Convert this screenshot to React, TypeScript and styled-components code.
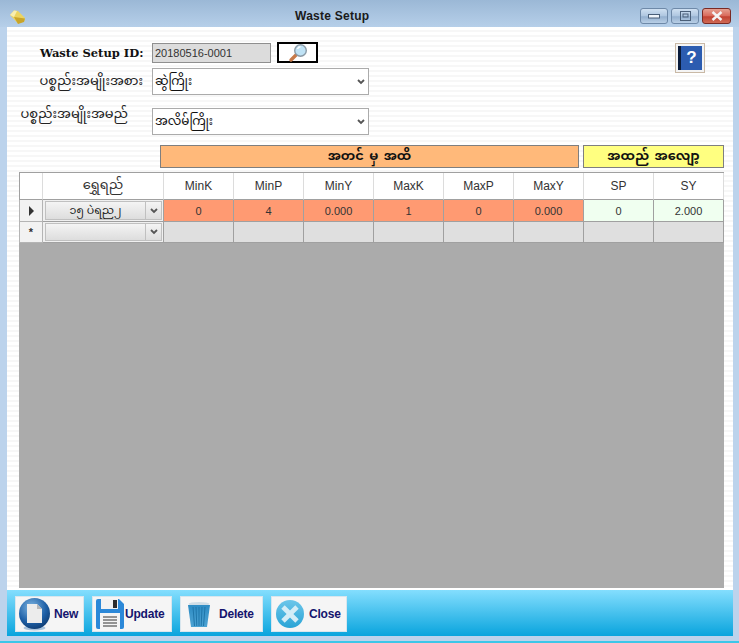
import React from 'react'
import styled, { createGlobalStyle } from 'styled-components'

const GlobalStyle = createGlobalStyle`
  html, body { margin: 0; padding: 0; background: #b9d1ea; }
  * { box-sizing: border-box; }
  body { font-family: "Liberation Sans", Arial, sans-serif; }
`

const MYANMAR = '"Noto Sans Myanmar", "Myanmar Text", "Padauk", "Noto Sans", "DejaVu Sans", sans-serif'

const columns = ['MinK', 'MinP', 'MinY', 'MaxK', 'MaxP', 'MaxY', 'SP', 'SY']
const values = ['0', '4', '0.000', '1', '0', '0.000', '0', '2.000']

const Chevron: React.FC = () => (
  <svg width="8" height="6" viewBox="0 0 8 6">
    <path d="M1 1l3 3 3-3" fill="none" stroke="#555" strokeWidth="1.8" />
  </svg>
)

const GemIcon: React.FC = () => (
  <svg width="16" height="14" viewBox="0 0 16 14">
    <path d="M0 5l4-4.500 4 .5 7 7-1 3.500-6 2z" fill="#ecd460" />
    <path d="M0 5l4-4.500 3 .5-3 6z" fill="#f8eeb0" />
    <path d="M4 7l11 1.500-1 3.500-6 2z" fill="#c9a52a" />
  </svg>
)

const SearchIcon: React.FC = () => (
  <svg width="20" height="20" viewBox="0 0 20 20">
    <path d="M8.500 11.500L3 17" stroke="#c77a4a" strokeWidth="3.400" strokeLinecap="round" />
    <circle cx="12.500" cy="7.500" r="5.800" fill="#bfe2f5" stroke="#8a9aa6" strokeWidth="1.400" />
    <path d="M9.500 6a3.500 3.500 0 0 1 3-2.200" stroke="#fff" strokeWidth="1.400" fill="none" />
  </svg>
)

const NewIcon: React.FC = () => (
  <svg width="31" height="33" viewBox="0 0 31 33">
    <defs>
      <radialGradient id="newGlobe" cx="0.4" cy="0.3" r="0.8">
        <stop offset="0" stopColor="#7fb6e2" />
        <stop offset="0.6" stopColor="#1d5fa6" />
        <stop offset="1" stopColor="#0c3466" />
      </radialGradient>
    </defs>
    <ellipse cx="15.500" cy="30" rx="11" ry="2.500" fill="#a9c3dc" />
    <circle cx="15.500" cy="15.500" r="15.500" fill="url(#newGlobe)" />
    <path d="M8 6h10l5 5v14H8z" fill="#ececec" />
    <path d="M18 6l5 5h-5z" fill="#b8b8b8" />
  </svg>
)

const SaveIcon: React.FC = () => (
  <svg width="28" height="30" viewBox="0 0 28 30">
    <path d="M0 2a2 2 0 0 1 2-2h21l5 5v23a2 2 0 0 1-2 2H2a2 2 0 0 1-2-2z" fill="#2b88d8" />
    <path d="M5 0h17v10H5z" fill="#f2f2f2" />
    <path d="M17 1h4v8h-4z" fill="#2c2c2c" />
    <path d="M4 14h20v16H4z" fill="#f4f4f4" />
    <path d="M7 18h14M7 21h14M7 24h14M7 27h14" stroke="#333" strokeWidth="1.200" />
  </svg>
)

const TrashIcon: React.FC = () => (
  <svg width="22" height="25" viewBox="0 0 22 25">
    <defs>
      <linearGradient id="trashBody" x1="0" y1="0" x2="0" y2="1">
        <stop offset="0" stopColor="#2e8cc4" />
        <stop offset="1" stopColor="#4da3d3" />
      </linearGradient>
    </defs>
    <ellipse cx="11" cy="2" rx="10.500" ry="2" fill="#cfdde6" />
    <path d="M0 3h22l-3 22H3z" fill="url(#trashBody)" />
    <path d="M5 5l1.500 19M8 5l.8 19M11 5v19M14 5l-.8 19M17 5l-1.500 19" stroke="#1f76aa" strokeWidth="1" />
  </svg>
)

const CloseIcon: React.FC = () => (
  <svg width="28" height="28" viewBox="0 0 29 29">
    <defs>
      <linearGradient id="closeDisc" x1="0" y1="0" x2="0" y2="1">
        <stop offset="0" stopColor="#6cc6ea" />
        <stop offset="1" stopColor="#2aa4d6" />
      </linearGradient>
    </defs>
    <circle cx="14.500" cy="14.500" r="14.500" fill="url(#closeDisc)" />
    <path d="M9 5.500l5.500 5.500L20 5.500l3.500 3.500-5.500 5.500 5.500 5.500-3.500 3.500-5.500-5.500L9 23.500 5.500 20l5.500-5.500L5.500 9z" fill="#d4edf7" />
  </svg>
)

const App: React.FC = () => {
  return (
    <>
      <GlobalStyle />
      <Window>
        <TitleBar>
          <TitleIcon><GemIcon /></TitleIcon>
          <Title>Waste Setup</Title>
          <Controls>
            <ControlButton $width={28}>
              <svg width="12" height="6" viewBox="0 0 12 6"><rect x="0.500" y="1.500" width="11" height="3.500" fill="#eef4fa" stroke="#4a5f78" /></svg>
            </ControlButton>
            <ControlButton $width={28}>
              <svg width="11" height="10" viewBox="0 0 11 10"><rect x="0.500" y="0.500" width="10" height="9" fill="none" stroke="#4a5f78" /><rect x="3" y="3" width="5" height="3" fill="none" stroke="#4a5f78" /></svg>
            </ControlButton>
            <ControlButton $width={29} $danger>
              <svg width="12" height="10" viewBox="0 0 12 10"><path d="M1.500 1l9 8M10.500 1l-9 8" stroke="#f4f4f4" strokeWidth="2.400" /></svg>
            </ControlButton>
          </Controls>
        </TitleBar>
        <Client>
          <Body>
            <FormArea>
              <FormRows>
                <IdRow>
                  <BoldLabel>Waste Setup ID:</BoldLabel>
                  <IdInput>20180516-0001</IdInput>
                  <SearchButton><SearchIcon /></SearchButton>
                </IdRow>
                <TypeRow>
                  <MmLabel>ပစ္စည်းအမျိုးအစား</MmLabel>
                  <Select><span>ဆွဲကြိုး</span><Chevron /></Select>
                </TypeRow>
                <NameRow>
                  <MmLabel>ပစ္စည်းအမျိုးအမည်</MmLabel>
                  <Select><span>အလိမ်ကြိုး</span><Chevron /></Select>
                </NameRow>
              </FormRows>
              <HelpButton><span>?</span></HelpButton>
            </FormArea>
            <BandRow>
              <Band $color="#ffb97a" $width={419}>အတင် မှ အထိ</Band>
              <Band $color="#ffff80" $width={141}>အထည် အလျော့</Band>
            </BandRow>
            <DataGrid>
              <GridTable>
                <HeaderCell />
                <HeaderCell $mm>ရွှေရည်</HeaderCell>
                {columns.map((c) => (
                  <HeaderCell key={c}>{c}</HeaderCell>
                ))}
                <RowHead>
                  <svg width="7" height="10" viewBox="0 0 7 10"><path d="M1 0l5 5-5 5z" fill="#333" /></svg>
                </RowHead>
                <ComboCell>
                  <ComboField>၁၅ ပဲရည၂</ComboField>
                  <ComboArrow><Chevron /></ComboArrow>
                </ComboCell>
                {values.map((v, i) => (
                  <ValueCell key={columns[i]} $bg={i < 6 ? '#ff9a72' : '#f0fff0'}>{v}</ValueCell>
                ))}
                <RowHead $small>*</RowHead>
                <ComboCell>
                  <ComboField />
                  <ComboArrow><Chevron /></ComboArrow>
                </ComboCell>
                {columns.map((c) => (
                  <ValueCell key={c} $bg="#dfdfdf" />
                ))}
              </GridTable>
            </DataGrid>
          </Body>
          <Toolbar>
            <ToolButton $width={69} $pad={3}><NewIcon /><ToolText $gap={4}>New</ToolText></ToolButton>
            <ToolButton $width={80} $pad={3}><SaveIcon /><ToolText $gap={1}>Update</ToolText></ToolButton>
            <ToolButton $width={83} $pad={7}><TrashIcon /><ToolText $gap={9}>Delete</ToolText></ToolButton>
            <ToolButton $width={76} $pad={4}><CloseIcon /><ToolText $gap={5}>Close</ToolText></ToolButton>
          </Toolbar>
        </Client>
      </Window>
    </>
  )
}

const Window = styled.div`
  width: 739px;
  height: 643px;
  display: flex;
  flex-direction: column;
  overflow: hidden;
  background: #bcd3ec;
  border-bottom: 2px solid #3cc6e8;
`

const TitleBar = styled.div`
  height: 27px;
  flex: none;
  display: flex;
  align-items: center;
  position: relative;
  padding: 0 8px 0 10px;
  background: linear-gradient(#9bb8d6, #b6cfe9);
`

const TitleIcon = styled.div`
  display: flex;
  margin-top: 6px;
`

const Title = styled.div`
  position: absolute;
  left: 295px;
  top: 9px;
  font-size: 12px;
  line-height: 14px;
  font-weight: bold;
  letter-spacing: 0.25px;
  color: #1a1a1a;
`

const Controls = styled.div`
  margin-left: auto;
  display: flex;
  gap: 3px;
  margin-top: 5px;
`

const ControlButton = styled.div<{ $width: number; $danger?: boolean }>`
  width: ${(p) => p.$width}px;
  height: 16px;
  display: flex;
  align-items: center;
  justify-content: center;
  border-radius: 3px;
  border: 1px solid ${(p) => (p.$danger ? '#7a2a24' : '#6e89a8')};
  background: ${(p) =>
    p.$danger
      ? 'linear-gradient(#e5a192, #d9695a 50%, #c24232 55%, #cf6a55)'
      : 'linear-gradient(#cfe0f1, #aec6e0 50%, #94b0cf 55%, #b9cfe6)'};
`

const Client = styled.div`
  flex: 1;
  margin: 0 6px 5px 7px;
  display: flex;
  flex-direction: column;
  min-height: 0;
`

const Body = styled.div`
  flex: 1;
  min-height: 0;
  display: flex;
  flex-direction: column;
  padding: 0 9px 0 12px;
  background: repeating-linear-gradient(#ffffff 0 3px, #f7f7f7 3px 5px);
`

const FormArea = styled.div`
  height: 118px;
  flex: none;
  display: flex;
  justify-content: space-between;
  padding: 15px 19px 0 0;
`

const FormRows = styled.div`
  display: flex;
  flex-direction: column;
`

const IdRow = styled.div`
  height: 21px;
  display: flex;
  align-items: center;
  padding-left: 21px;
`

const BoldLabel = styled.div`
  width: 112px;
  font-family: "DejaVu Serif", "Liberation Serif", serif;
  font-size: 11.5px;
  font-weight: bold;
  white-space: nowrap;
  color: #111;
`

const IdInput = styled.div`
  width: 119px;
  height: 20px;
  background: #dcdcdc;
  border: 1px solid #8f8f8f;
  font-size: 11px;
  line-height: 18px;
  padding-left: 2px;
  color: #333;
`

const SearchButton = styled.div`
  width: 41px;
  height: 21px;
  margin-left: 6px;
  border: 2px solid #000;
  background: #fff;
  display: flex;
  align-items: center;
  justify-content: center;
`

const MmLabel = styled.div`
  font-family: ${MYANMAR};
  font-size: 13px;
  line-height: 14px;
  white-space: nowrap;
  color: #222;
  text-align: right;
`

const TypeRow = styled.div`
  margin-top: 5px;
  display: grid;
  grid-template-columns: 124px 217px;
  column-gap: 9px;
  align-items: center;
`

const NameRow = styled.div`
  margin-top: 13px;
  display: grid;
  grid-template-columns: 109px 217px;
  column-gap: 24px;
  align-items: start;
`

const Select = styled.div`
  height: 27px;
  border: 1px solid #ababab;
  background: #fff;
  display: flex;
  align-items: center;
  justify-content: space-between;
  padding: 0 3px 0 2px;
  font-family: ${MYANMAR};
  font-size: 12px;
  color: #111;
`

const HelpButton = styled.div`
  width: 30px;
  height: 30px;
  margin-top: 1px;
  border: 1px solid #c9b9a6;
  padding: 2px;
  background: #f4f4f4;
  span {
    display: block;
    height: 100%;
    background: linear-gradient(90deg, #0a1b3a 0 3px, #2c5cb0 3px);
    color: #fff;
    font-size: 17px;
    font-weight: bold;
    line-height: 24px;
    text-align: center;
    padding-left: 3px;
  }
`

const BandRow = styled.div`
  display: flex;
  gap: 4px;
  height: 23px;
  flex: none;
  margin-left: 141px;
`

const Band = styled.div<{ $color: string; $width: number }>`
  width: ${(p) => p.$width}px;
  background: ${(p) => p.$color};
  border: 1px solid #7f7f7f;
  display: flex;
  align-items: center;
  justify-content: center;
  font-family: ${MYANMAR};
  font-size: 13px;
  font-weight: bold;
  word-spacing: 2px;
  color: #111;
`

const DataGrid = styled.div`
  margin-top: 4px;
  flex: 1;
  min-height: 0;
  background: #ababab;
  border-top: 1px solid #a0a0a0;
`

const GridTable = styled.div`
  display: grid;
  grid-template-columns: 24px 121px repeat(8, 70px);
  grid-template-rows: 27px 22px 21px;
`

const HeaderCell = styled.div<{ $mm?: boolean }>`
  background: #fff;
  border-right: 1px solid #dcdcdc;
  border-bottom: 1px solid #a0a0a0;
  display: flex;
  align-items: center;
  justify-content: center;
  font-size: ${(p) => (p.$mm ? '13px' : '12px')};
  font-family: ${(p) => (p.$mm ? MYANMAR : 'inherit')};
  color: #333;
  &:first-child { border-left: 1px solid #a0a0a0; }
`

const RowHead = styled.div<{ $small?: boolean }>`
  background: #f2f2f2;
  border: 1px solid #b4b4b4;
  border-top: 0;
  display: flex;
  align-items: center;
  justify-content: center;
  font-size: ${(p) => (p.$small ? '11px' : '12px')};
  font-weight: ${(p) => (p.$small ? 'bold' : 'normal')};
  color: #333;
`

const ComboCell = styled.div`
  display: flex;
  background: #f0f0f0;
  border-right: 1px solid #a0a0a0;
  border-bottom: 1px solid #a0a0a0;
  padding: 1px 1px 1px 2px;
`

const ComboField = styled.div`
  flex: 1;
  background: linear-gradient(#f4f4f4, #dddddd);
  border: 1px solid #c0c0c0;
  font-family: ${MYANMAR};
  font-size: 11px;
  display: flex;
  align-items: center;
  justify-content: center;
  color: #222;
`

const ComboArrow = styled.div`
  width: 16px;
  background: linear-gradient(#f4f4f4, #dddddd);
  border: 1px solid #c0c0c0;
  border-left: 0;
  display: flex;
  align-items: center;
  justify-content: center;
`

const ValueCell = styled.div<{ $bg: string }>`
  background: ${(p) => p.$bg};
  border-right: 1px solid #a0a0a0;
  border-bottom: 1px solid #a0a0a0;
  display: flex;
  align-items: center;
  justify-content: center;
  font-size: 11px;
  color: #333;
`

const Toolbar = styled.div`
  height: 48px;
  flex: none;
  display: flex;
  gap: 8px;
  padding: 6px 0 4px 8px;
  background: linear-gradient(#84defe, #09a4dd);
  border-top: 2px solid #fff;
`

const ToolButton = styled.div<{ $width: number; $pad: number }>`
  width: ${(p) => p.$width}px;
  background: #f5f5f5;
  border: 1px solid #d8e6ee;
  display: flex;
  align-items: center;
  padding-left: ${(p) => p.$pad}px;
`

const ToolText = styled.span<{ $gap: number }>`
  margin-left: ${(p) => p.$gap}px;
  font-size: 12px;
  font-weight: bold;
  letter-spacing: -0.2px;
  color: #14146e;
`

export default App
